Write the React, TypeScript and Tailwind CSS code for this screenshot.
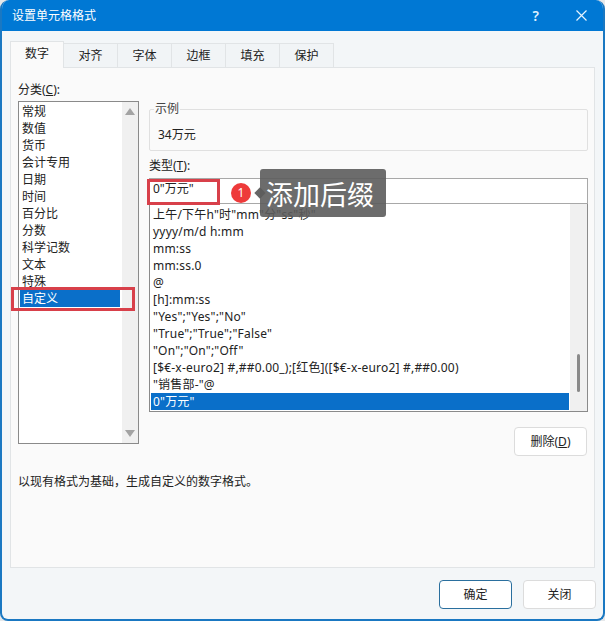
import React from "react";

const font = "font-['Noto_Sans','Noto_Sans_CJK_SC',sans-serif]";

const tabs = ["数字", "对齐", "字体", "边框", "填充", "保护"];
const categories = ["常规", "数值", "货币", "会计专用", "日期", "时间", "百分比", "分数", "科学记数", "文本", "特殊", "自定义"];
const formats = [
  '上午/下午h"时"mm"分"ss"秒"',
  "yyyy/m/d h:mm",
  "mm:ss",
  "mm:ss.0",
  "@",
  "[h]:mm:ss",
  '"Yes";"Yes";"No"',
  '"True";"True";"False"',
  '"On";"On";"Off"',
  "[$€-x-euro2] #,##0.00_);[红色]([$€-x-euro2] #,##0.00)",
  '"销售部-"@',
  '0"万元"',
];

function ScrollArrow({ up }: { up?: boolean }) {
  return (
    <svg width="10" height="7" viewBox="0 0 10 7" className="shrink-0">
      <path d={up ? "M5 0 L10 7 L0 7 Z" : "M0 0 L10 0 L5 7 Z"} fill="#a3a3a3" />
    </svg>
  );
}

function Button({ children, primary }: { children: React.ReactNode; primary?: boolean }) {
  return (
    <button
      className={`w-[73px] h-[29px] rounded-[4px] bg-white text-[12px] text-[#222] border ${
        primary ? "border-[#2a6f9e] border-[1.5px]" : "border-[#dcdcdc]"
      }`}
    >
      {children}
    </button>
  );
}

export default function App() {
  return (
    <div className={`relative w-[605px] h-[621px] overflow-hidden bg-[#e6e8ea] ${font}`}>
      <div className="flex flex-col h-full rounded-t-[9px] rounded-b-[8px] overflow-hidden border-l-[2px] border-r-[2px] border-b-[2px] border-[#1a78c2] bg-[#f3f6f8]">
        {/* Title bar */}
        <div className="h-[31px] shrink-0 -mx-[2px] bg-[#0078d4] flex items-center pl-[12px] pr-[18px] text-white text-[12px]">
          <span className="flex-1">设置单元格格式</span>
          <span className="text-[14px] font-semibold mr-[37px] text-[#dff1ff]">?</span>
          <svg width="11" height="11" viewBox="0 0 11 11">
            <path d="M0.5 0.5 L10.5 10.5 M10.5 0.5 L0.5 10.5" stroke="#e6f4ff" strokeWidth="1.2" />
          </svg>
        </div>

        {/* Tabs */}
        <div className="h-[36px] shrink-0 pl-[8px] flex items-end">
          {tabs.map((tab, i) => (
            <div
              key={tab}
              className={`w-[54px] flex items-center justify-center text-[12px] text-[#222] border-t border-r border-[#e1e4e6] ${
                i === 0
                  ? "h-[27px] bg-[#fafafa] border-l pb-[3px] -mb-px relative"
                  : "h-[24px] bg-[#f1f4f6]"
              }`}
            >
              {tab}
            </div>
          ))}
        </div>

        {/* Panel */}
        <div className="h-[501px] shrink-0 ml-[8px] mr-[8px] bg-[#fafafa] border border-[#e1e4e6] pl-[7px] pr-[6px] flex flex-col">
          <div className="flex gap-[10px] pt-[11px]">
            {/* Category column */}
            <div className="w-[121px] shrink-0">
              <div className="h-[22px] text-[12px] text-[#222] leading-[22px]">
                分类(<span className="underline">C</span>):
              </div>
              <div className="flex h-[343px] border border-[#8a8a8a] bg-white">
                <div className="flex-1 pt-[1px] pl-[1px] pr-[2px] text-[12px] text-[#222] leading-[17px]">
                  {categories.map((c, i) => (
                    <div
                      key={c}
                      className={`h-[17px] pl-[2px] ${i === 11 ? "bg-[#0a6fc9] text-white" : ""}`}
                    >
                      {c}
                    </div>
                  ))}
                </div>
                <div className="w-[16px] shrink-0 bg-[#f0f0f0] flex flex-col items-center justify-between py-[6px]">
                  <ScrollArrow up />
                  <ScrollArrow />
                </div>
              </div>
            </div>

            {/* Format column */}
            <div className="flex-1 min-w-0">
              <div className="relative h-[42px] mt-[30px] border border-[#e0e0e0] rounded-[2px]">
                <span className="absolute -top-[9px] left-[4px] px-[1px] bg-[#fafafa] text-[12px] leading-[16px] text-[#444]">示例</span>
                <div className="pl-[8px] pt-[16px] text-[12px] leading-[18px] text-[#222]">34万元</div>
              </div>
              <div className="h-[27px] pt-[7px] text-[12px] leading-[16px] text-[#222]">
                类型(<span className="underline">T</span>):
              </div>
              <div className="h-[26px] border border-[#a8a8a8] bg-white pl-[3px] text-[12px] leading-[20px] text-[#222]">
                0"万元"
              </div>
              <div className="flex h-[208px] border border-t-0 border-[#8a8a8a] bg-white">
                <div className="flex-1 min-w-0 pt-[2px] pl-[1px] pr-[1px] text-[12px] leading-[17px] tracking-[0.2px] text-[#222]">
                  {formats.map((f, i) => (
                    <div
                      key={f}
                      className={`h-[17px] pl-[2px] whitespace-nowrap ${i === 11 ? "bg-[#0a6fc9] text-white" : ""}`}
                    >
                      {f}
                    </div>
                  ))}
                </div>
                <div className="w-[17px] shrink-0 bg-[#f0f0f0] flex justify-center pt-[150px]">
                  <div className="w-[3px] h-[38px] rounded-full bg-[#8a8a8a]" />
                </div>
              </div>
              <div className="flex justify-end mt-[15px] pr-[1px]">
                <Button>
                  删除(<span className="underline">D</span>)
                </Button>
              </div>
            </div>
          </div>
          <div className="mt-[17px] text-[12px] leading-[18px] text-[#222]">
            以现有格式为基础，生成自定义的数字格式。
          </div>
        </div>

        {/* Footer */}
        <div className="flex justify-end gap-[11px] pt-[12px] pr-[7px]">
          <Button primary>确定</Button>
          <Button>关闭</Button>
        </div>
      </div>

      {/* Annotations on top of the dialog */}
      <div className="absolute left-[11px] top-[287px] w-[124px] h-[24px] border-[3px] border-[#d8404a]" />
      <div className="absolute left-[147px] top-[179px] w-[73px] h-[26px] border-[3px] border-[#d8404a]" />
      <div className="absolute left-[231px] top-[183px] w-[20px] h-[20px] rounded-full bg-[#ee3a3a] flex items-center justify-center text-white text-[12px]">
        1
      </div>
      <div className="absolute left-[256px] top-[189px] w-[8px] h-[8px] rotate-45 bg-[#666]" />
      <div className="absolute left-[260px] top-[169px] w-[126px] h-[48px] rounded-[3px] bg-[#5c5c5c]/90 flex items-center pl-[6px] pt-[3px] text-white text-[27px] leading-none">
        添加后缀
      </div>
    </div>
  );
}
